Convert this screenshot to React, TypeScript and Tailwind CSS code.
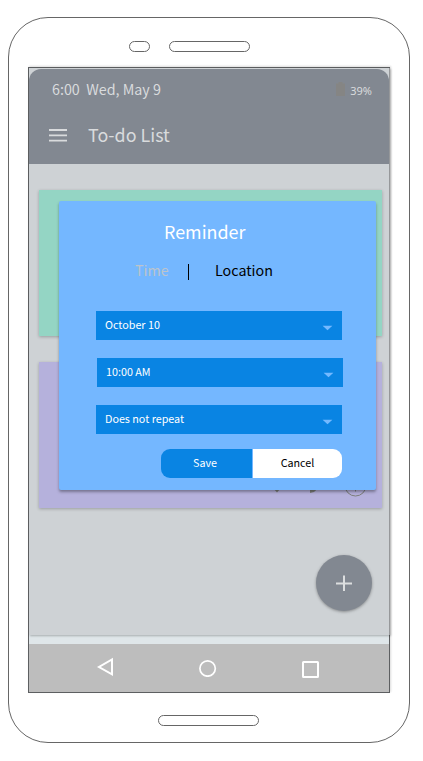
import React from "react";

function Field({ label, className = "" }: { label: string; className?: string }) {
  return (
    <button className={`flex h-[29px] w-[246px] items-center justify-between bg-[#0984e3] pl-[9px] pr-[9px] text-left text-[10.75px] leading-[16px] text-white ${className}`}>
      <span className="-mt-[2px]">{label}</span>
      <svg width="11" height="6" viewBox="0 0 11 6" className="mt-[4px]">
        <path d="M0.6 0.8H10.4L5.5 5.2Z" fill="#74b9ff" />
      </svg>
    </button>
  );
}

function StatusBar() {
  return (
    <div className="flex h-[42px] items-center justify-between pl-[23px] pr-[17px]">
      <span className="-mt-[2px] whitespace-pre text-[14.3px] leading-[20px]">6:00  Wed, May 9</span>
      <div className="flex items-center gap-[5px]">
        <svg width="9" height="14" viewBox="0 0 9 14" className="-mt-[3px]">
          <path d="M2.5 0H6.5V1.5H9V14H0V1.5H2.5Z" fill="#858584" />
        </svg>
        <span className="mt-px font-['Noto_Sans',sans-serif] text-[11px] leading-[14px]">39%</span>
      </div>
    </div>
  );
}

function Dialog() {
  return (
    <div className="absolute left-[30px] top-[133px] flex h-[289px] w-[316.5px] flex-col rounded-[2px] bg-[#74b7ff] pl-[37px] shadow-[0_2px_3px_rgba(0,0,0,0.35)]">
      <h2 className="mt-[17px] pl-[68px] text-[17.9px] leading-[26px] text-white">Reminder</h2>
      <div className="mt-[16px] flex h-[20px] items-center pl-[39px] text-[14.3px] leading-[20px]">
        <span className="w-[53px] text-[#bcc4cc]">Time</span>
        <span className="mt-[4px] h-4 w-px bg-black" />
        <span className="ml-[26px] text-black">Location</span>
      </div>
      <div className="mt-[31px] flex flex-col gap-[18px]">
        <Field label="October 10" />
        <Field label="10:00 AM" className="ml-px" />
        <Field label="Does not repeat" />
      </div>
      <div className="ml-[65px] mt-[15px] flex h-[29px] w-[181px] text-[10.75px] leading-[16px]">
        <button className="w-[91px] rounded-l-[9px] bg-[#0984e3] pb-[2px] pr-[3px] text-white">Save</button>
        <button className="ml-px w-[89px] rounded-r-[9px] bg-white pb-[2px] text-black">Cancel</button>
      </div>
    </div>
  );
}

export default function App() {
  return (
    <div className="flex h-[761px] w-[423px] flex-col bg-white pl-[8px] pt-[17px] font-['Noto_Sans_CJK_SC',sans-serif]">
      <div className="flex h-[726px] w-[402px] flex-col rounded-[40px] border border-[#666]">
        <div className="flex h-[49px] items-start gap-[19px] pl-[119.5px] pt-[23px]">
          <div className="h-[11px] w-[21px] rounded-full border border-[#666]" />
          <div className="h-[11px] w-[81px] rounded-full border border-[#666]" />
        </div>

        <div className="relative ml-[19px] h-[626px] w-[362px] border border-[#5d5f61] bg-[#dfe6e9] shadow-[1px_-1px_2px_rgba(0,0,0,0.14)]">
          <div className="h-[567px] w-[361px] border-r border-[#96989a] bg-[#ced2d5] pt-px shadow-[1px_1px_2px_rgba(0,0,0,0.25)]">
            <header className="h-[95px] rounded-t-[12px] bg-[#828891] text-[#d9dbdd]">
              <StatusBar />
              <div className="flex h-[49px] items-center pl-[20px]">
                <svg width="18" height="14" viewBox="0 0 18 14" className="-mt-px">
                  <path d="M0 2H18M0 7.3H18M0 12.7H18" stroke="currentColor" strokeWidth="1.8" />
                </svg>
                <h1 className="-mt-[4px] ml-[21px] text-[17.9px] leading-[26px]">To-do List</h1>
              </div>
            </header>
            <main className="flex flex-col gap-[26px] pl-[10px] pr-[7px] pt-[26px]">
              <div className="h-[146px] bg-[#94d5c4] shadow-[0_1px_3px_rgba(0,0,0,0.25)]" />
              <div className="flex h-[146px] items-end justify-end bg-[#b5b1dc] pb-[11px] pr-[15px] text-[#7c7e7b] shadow-[0_1px_3px_rgba(0,0,0,0.25)]">
                <svg width="12" height="20" viewBox="0 0 12 20" className="mr-[25px]">
                  <path d="M2 11H10L6 15.5Z" fill="currentColor" />
                </svg>
                <svg width="20" height="20" viewBox="0 0 20 20" className="mr-[15px]">
                  <path d="M2 16V12L13 1L17 5L6 15Z" fill="currentColor" />
                </svg>
                <svg width="24" height="24" viewBox="0 0 24 24" className="shrink-0">
                  <circle cx="12.5" cy="12.5" r="10.5" fill="none" stroke="currentColor" />
                  <path d="M12.5 6V18.5" stroke="currentColor" />
                </svg>
              </div>
            </main>
          </div>
          <nav className="mt-[9px] flex h-[48px] bg-[#bdbdbd]">
            <svg width="18" height="20" viewBox="0 0 18 20" className="ml-[67px] mt-[13px]" fill="none" stroke="white" strokeWidth="2">
              <path d="M16 2.5V17.3L3 10Z" />
            </svg>
            <svg width="18" height="18" viewBox="0 0 18 18" className="ml-[85px] mt-[15px]" fill="none" stroke="white" strokeWidth="1.7">
              <circle cx="8.6" cy="9.5" r="7.7" />
            </svg>
            <svg width="17" height="17" viewBox="0 0 17 17" className="ml-[85px] mt-[17px]" fill="none" stroke="white" strokeWidth="2">
              <rect x="1" y="1" width="15" height="15" rx="0.5" />
            </svg>
          </nav>

          <Dialog />

          <button aria-label="Add" className="absolute left-[287px] top-[487px] flex h-[56px] w-[56px] items-center justify-center rounded-full bg-[#828891] shadow-[0_1px_3px_rgba(0,0,0,0.35)]">
            <svg width="16" height="16" viewBox="0 0 16 16">
              <path d="M0 8.5H16M8 0.5V16" stroke="#dcdedf" strokeWidth="2" />
            </svg>
          </button>
        </div>

        <div className="ml-[149px] mt-[22px] h-[11px] w-[101px] rounded-full border border-[#666]" />
      </div>
    </div>
  );
}
